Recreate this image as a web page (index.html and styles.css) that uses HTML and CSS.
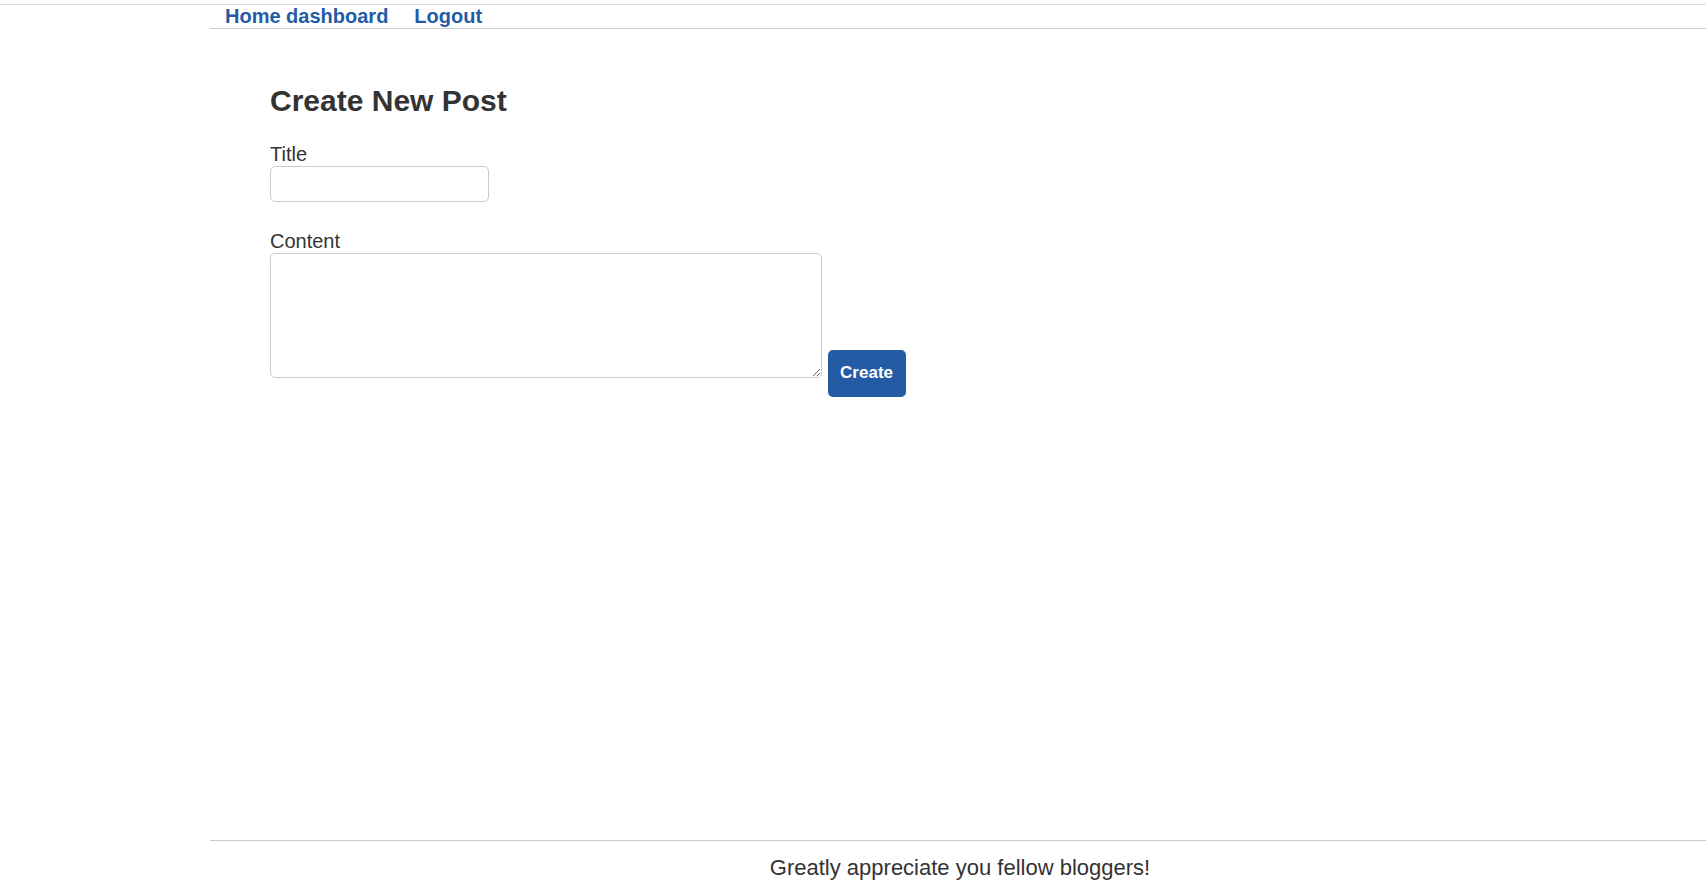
FILE: index.html
```html
<!DOCTYPE html>
<html lang="en">
<head>
<meta charset="utf-8">
<title>Create New Post</title>
<link rel="stylesheet" href="styles.css">
</head>
<body>
<div class="topline"></div>
<div class="page">
  <nav class="nav">
    <a href="#" class="nav-link">Home dashboard</a>
    <a href="#" class="nav-link">Logout</a>
  </nav>
  <main class="main">
    <h1 class="heading">Create New Post</h1>
    <form class="form">
      <label class="label" for="title">Title</label>
      <input class="input" id="title" type="text">
      <label class="label label-content" for="content">Content</label>
      <div class="row"><textarea class="textarea" id="content"></textarea> <button type="button" class="btn">Create</button></div>
    </form>
  </main>
  <footer class="footer">Greatly appreciate you fellow bloggers!</footer>
</div>
</body>
</html>
```
FILE: styles.css
```css
html, body {
  margin: 0;
  padding: 0;
  background: #fff;
}
body {
  font-family: "Liberation Sans", Arial, sans-serif;
  color: #333;
}
.topline {
  height: 4px;
  border-bottom: 1px solid #dcdcdc;
}
.page {
  margin-left: 210px;
  height: calc(100vh - 5px);
  display: flex;
  flex-direction: column;
}
.nav {
  display: flex;
  gap: 26px;
  padding-left: 15px;
  height: 23px;
  align-items: center;
  border-bottom: 1px solid #cccccc;
}
.nav-link {
  color: #235ca5;
  font-weight: bold;
  font-size: 20px;
  line-height: 23px;
  text-decoration: none;
}
.main {
  flex: 1;
  padding-left: 60px;
}
.heading {
  margin: 55px 0 25px;
  font-size: 30px;
  line-height: 34px;
  font-weight: bold;
  color: #333;
}
.form {
  margin: 0;
}
.label {
  display: block;
  font-size: 20px;
  line-height: 23px;
  color: #333;
}
.label-content {
  margin-top: 28px;
}
.input {
  display: block;
  box-sizing: border-box;
  width: 219px;
  height: 36px;
  margin: 0;
  border: 1px solid #cccccc;
  border-radius: 5px;
  font-size: 17px;
  font-family: inherit;
}
.row {
  font-size: 20px;
}
.textarea {
  box-sizing: border-box;
  width: 552px;
  height: 125px;
  margin: 0;
  border: 1px solid #cccccc;
  border-radius: 5px;
  font-family: inherit;
  font-size: 17px;
  vertical-align: baseline;
}
.btn {
  box-sizing: border-box;
  width: 78px;
  height: 47px;
  background: #235ca5;
  color: #fff;
  font-family: inherit;
  font-weight: bold;
  font-size: 17px;
  border: none;
  border-radius: 5px;
  padding: 0;
  margin: 0;
}
.footer {
  border-top: 1px solid #cccccc;
  padding: 14px 0 11px 4px;
  text-align: center;
  font-size: 22px;
  line-height: 26px;
  color: #333;
}
```
